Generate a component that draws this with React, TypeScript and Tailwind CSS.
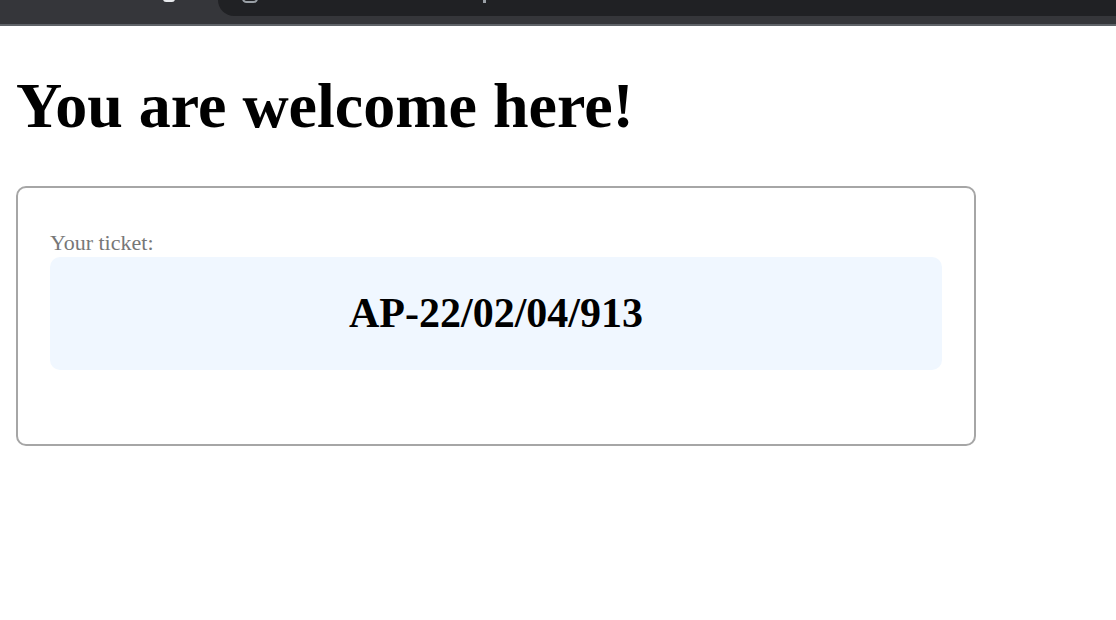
export default function App() {
  return (
    <div className="min-h-[620px] bg-white font-['Liberation_Serif',serif]">
      {/* browser chrome strip cut off at the top of the screenshot */}
      <div className="h-[26px] bg-[#35363a] border-b-2 border-[#5f6368] flex">
        <div className="w-[218px] relative">
          <div className="absolute left-[163px] -top-[4px] w-[12px] h-[6px] rounded-full bg-[#e8eaed]" />
        </div>
        <div className="flex-1 h-[16px] bg-[#202124] rounded-bl-[16px] relative">
          <div className="absolute left-[24px] -top-[6px] w-[16px] h-[9px] rounded-full border-2 border-[#9aa0a6]" />
          <div className="absolute left-[265px] -top-[2px] w-[3px] h-[5px] bg-[#9aa0a6]" />
        </div>
      </div>

      <div className="px-4">
        <h1 className="text-[64px] font-bold leading-none text-black mt-[48px] mb-[48px]">
          You are welcome here!
        </h1>

        <div className="w-[960px] border-2 border-[#a6a6a6] rounded-[10px] pt-[40px] pb-[74px] px-8">
          <div className="text-[22px] leading-[29px] text-[#777777]">
            Your ticket:
          </div>
          <div className="h-[113px] bg-[#f0f7ff] rounded-[10px] flex items-center justify-center">
            <span className="text-[42px] leading-none font-bold text-black mt-[-1px]">AP-22/02/04/913</span>
          </div>
        </div>
      </div>
    </div>
  );
}
